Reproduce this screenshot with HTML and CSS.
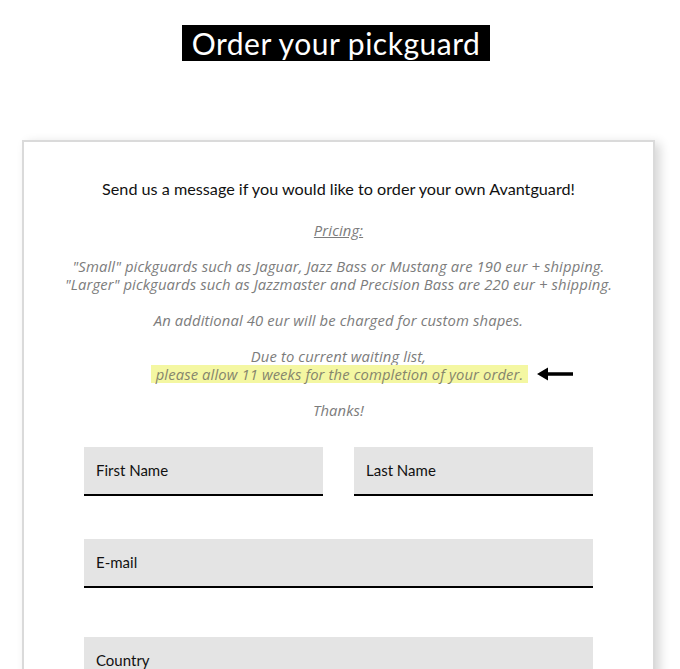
FILE: index.html
```html
<!DOCTYPE html>
<html>
<head>
<meta charset="utf-8">
<link rel="stylesheet" href="styles.css">
</head>
<body>
<header class="head">
  <h1 class="title">Order your pickguard</h1>
</header>
<main class="card">
  <p class="lead">Send us a message if you would like to order your own Avantguard!</p>
  <div class="info">
    <p><span class="u">Pricing:</span></p>
    <p>"Small" pickguards such as Jaguar, Jazz Bass or Mustang are 190 eur + shipping.<br>"Larger" pickguards such as Jazzmaster and Precision Bass are 220 eur + shipping.</p>
    <p>An additional 40 eur will be charged for custom shapes.</p>
    <p class="wait">Due to current waiting list,</p>
    <div class="hl-row"><span class="hl">please allow 11 weeks for the completion of your order.</span><svg class="arrow" width="36" height="14" viewBox="0 0 36 14"><path d="M0 7 L11 0.5 L11 5.3 L36 5.3 L36 8.7 L11 8.7 L11 13.5 Z" fill="#000"/></svg></div>
    <p>Thanks!</p>
  </div>
  <form class="form">
    <div class="row">
      <div class="field half">First Name</div>
      <div class="field half">Last Name</div>
    </div>
    <div class="field email">E-mail</div>
    <div class="field country">Country</div>
  </form>
</main>
</body>
</html>
```
FILE: styles.css
```css
html, body {
  margin: 0;
  padding: 0;
  background: #fff;
}
body {
  width: 680px;
  height: 669px;
  overflow: hidden;
}
.head {
  display: flex;
  justify-content: center;
  padding-top: 25px;
  padding-right: 8px;
}
.title {
  margin: 0;
  background: #000;
  color: #fff;
  font-family: "Lato", "DejaVu Sans", sans-serif;
  font-weight: 400;
  font-size: 30px;
  line-height: 36px;
  height: 36px;
  padding: 0 10px;
  letter-spacing: 0.5px;
}
.card {
  margin: 79px 0 0 22px;
  width: 633px;
  height: 600px;
  border: 2px solid #dadada;
  box-shadow: 5px 3px 10px rgba(0, 0, 0, 0.16);
  padding: 0 60px;
  box-sizing: border-box;
}
.lead {
  margin: 36px 0 0;
  text-align: center;
  font-family: "Lato", "DejaVu Sans", sans-serif;
  font-size: 16.2px;
  line-height: 22px;
  color: #111;
}
.info {
  margin: 21px -40px 0;
  text-align: center;
  font-family: "Open Sans", "DejaVu Sans", sans-serif;
  font-style: italic;
  font-weight: 400;
  font-size: 14.8px;
  line-height: 18px;
  letter-spacing: 0.12px;
  color: #7c7c7c;
  white-space: nowrap;
}
.info p {
  margin: 0 0 18px;
}
.info p.wait {
  margin: 0;
}
.u {
  text-decoration: underline;
}
.hl-row {
  display: flex;
  justify-content: center;
  align-items: center;
  height: 18px;
  margin: 0 0 18px 47px;
}
.hl {
  display: block;
  height: 18px;
  line-height: 18px;
  background: #f4f7a2;
  color: #85856c;
  padding: 0 5px;
}
.arrow {
  margin-left: 9px;
}
.form {
  margin-top: 28px;
  display: flex;
  flex-direction: column;
  font-family: "Lato", "Noto Sans", sans-serif;
  font-size: 15px;
  color: #111;
}
.row {
  display: flex;
  gap: 31px;
}
.field {
  box-sizing: border-box;
  height: 49px;
  flex: none;
  background: #e4e4e4;
  border-bottom: 2px solid #000;
  padding: 14px 12px 0;
}
.half {
  flex: 1;
}
.email {
  margin-top: 43px;
}
.country {
  margin-top: 49px;
}
```
